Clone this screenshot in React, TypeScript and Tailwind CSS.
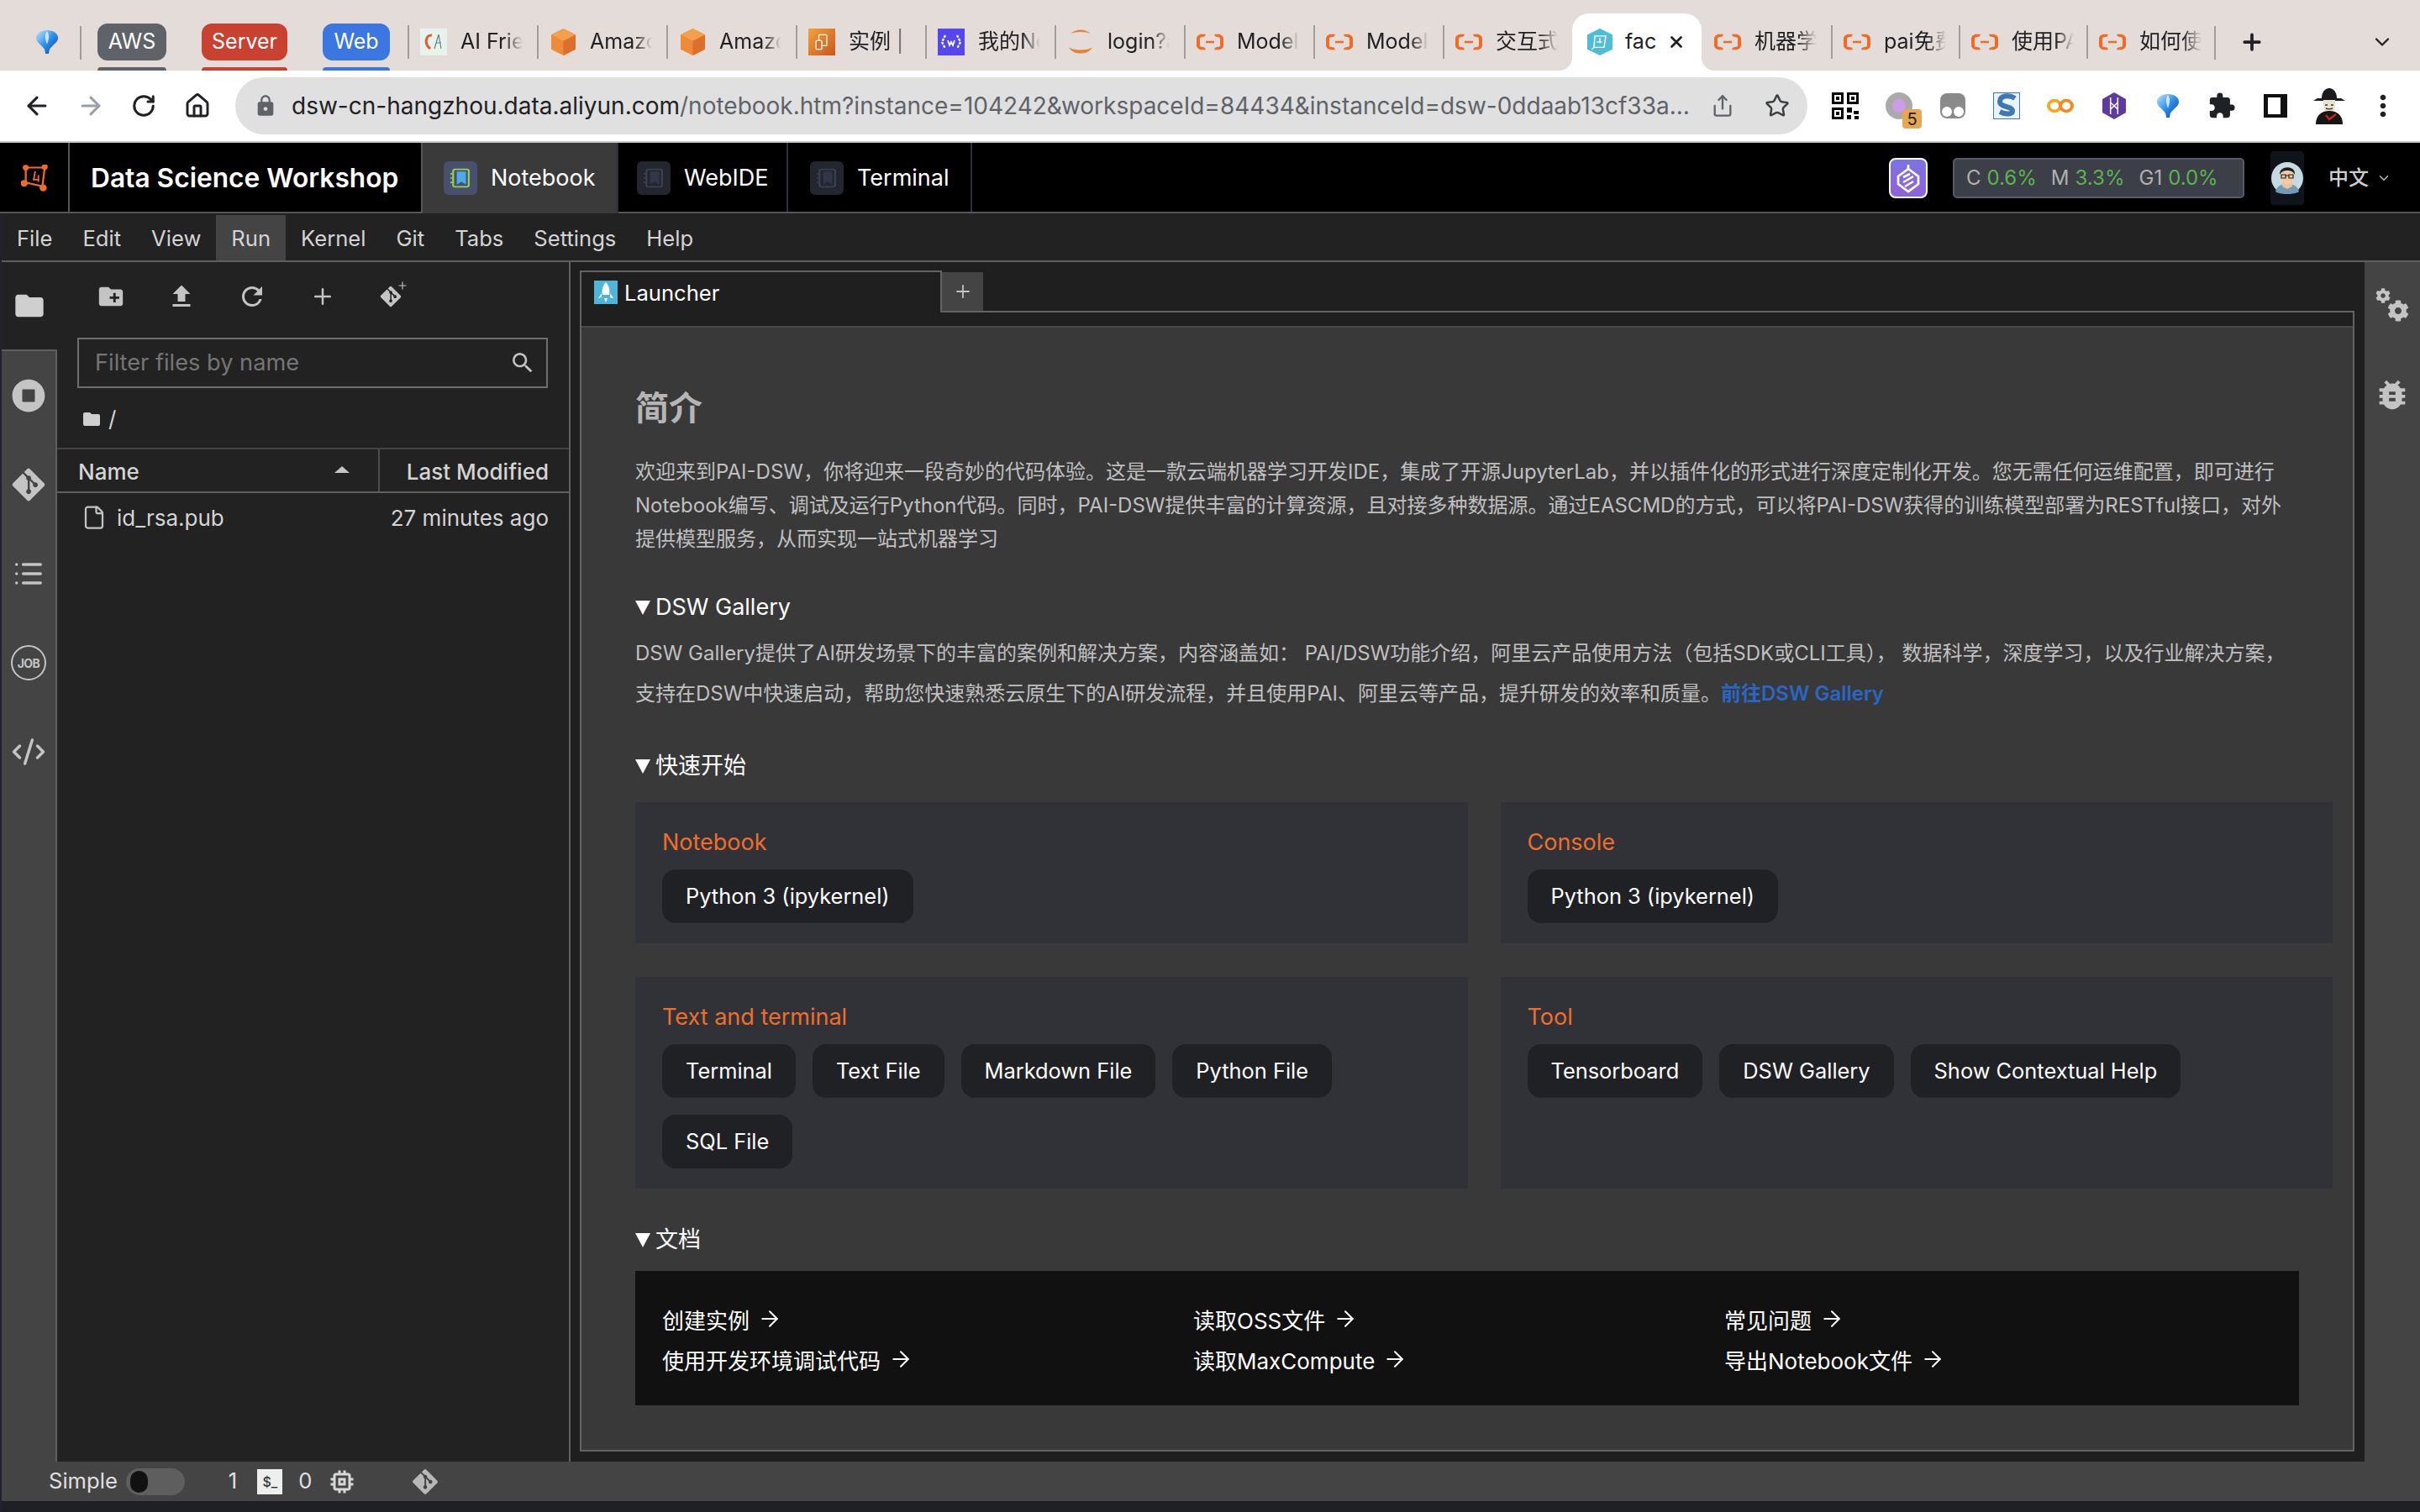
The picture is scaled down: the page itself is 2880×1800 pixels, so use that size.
import { ReactNode } from "react";
import {
  ArrowLeft,
  ArrowRight,
  ChevronDown,
  CodeXml,
  File,
  House,
  List,
  Plus,
  RotateCw,
  Share,
  Star,
  X,
} from "lucide-react";
import { FaCog, FaGitAlt, FaStopCircle } from "react-icons/fa";
import {
  MdBugReport,
  MdCreateNewFolder,
  MdExtension,
  MdFileUpload,
  MdFolder,
  MdLock,
  MdMemory,
  MdMoreVert,
  MdRefresh,
  MdSearch,
} from "react-icons/md";

const Balloon = () => (
  <svg width="28" height="30" viewBox="0 0 30 32">
    <defs>
      <linearGradient id="balloon" x1="0" y1="0" x2="1" y2="1">
        <stop offset="0" stopColor="#bfe6ff" />
        <stop offset="0.5" stopColor="#2f8fe8" />
        <stop offset="1" stopColor="#0b3f9e" />
      </linearGradient>
    </defs>
    <path d="M15 1C7 1 1 5 1 11c0 6 9 10 11 15l1 5h4l1-5c2-5 11-9 11-15 0-6-6-10-14-10Z" fill="url(#balloon)" />
    <path d="M15 2c-3 4-3 9 0 17 3-8 3-13 0-17Z" fill="#eaf6ff" opacity="0.8" />
  </svg>
);

const AliIcon = () => (
  <svg width="32" height="20" viewBox="0 0 32 24" preserveAspectRatio="none" fill="#f06c26">
    <path d="M11 1H6C3 1 0 4 0 7v10c0 3 3 6 6 6h5l-1-3-4-1c-1 0-2-1-2-2V7c0-1 1-2 2-2l4-1Z" />
    <path d="M21 1h5c3 0 6 3 6 6v10c0 3-3 6-6 6h-5l1-3 4-1c1 0 2-1 2-2V7c0-1-1-2-2-2l-4-1Z" />
    <rect x="11" y="10.5" width="10" height="3" />
  </svg>
);

const Cube = () => (
  <svg width="29" height="32" viewBox="0 0 30 40" preserveAspectRatio="none">
    <path d="M15 0 30 9v22l-15 9L0 31V9Z" fill="#ee8b3a" />
    <path d="M15 18 30 9v22l-15 9Z" fill="#dd6f2a" />
    <path d="M15 0 30 9 15 18 0 9Z" fill="#f3a04e" />
  </svg>
);

const CaiIcon = () => (
  <div className="flex h-8 w-8 items-center justify-center bg-[#e8f3ee]">
    <svg width="26" height="24" viewBox="0 0 26 24" fill="none">
      <path d="M11 4C4 3 1 14 9 20" stroke="#d8612a" strokeWidth="3" />
      <path d="M14 20 19 3l3 17M16 13h6" stroke="#6b7f80" strokeWidth="1.2" />
    </svg>
  </div>
);

const ChipIcon = () => (
  <div className="flex h-8 w-8 items-center justify-center bg-gradient-to-br from-[#f0a23a] to-[#c9561e]">
    <svg width="20" height="24" viewBox="0 0 22 28" fill="none" stroke="#fff" strokeWidth="1.5">
      <rect x="7" y="4" width="11" height="15" rx="1" />
      <rect x="3" y="12" width="8" height="12" rx="1" fill="#d9702a" />
    </svg>
  </div>
);

const CodeBlocks = () => (
  <div className="flex h-8 w-8 items-center justify-center bg-[#5546f0]">
    <svg width="26" height="20" viewBox="0 0 26 20" fill="none" stroke="#fff" strokeWidth="2.4">
      <path d="M6 2 2 10l4 8M20 2l4 8-4 8" strokeDasharray="3 1.5" />
      <path d="M9 8l2 6 2-4 2 4 2-6" strokeWidth="1.8" />
    </svg>
  </div>
);

const Swoosh = () => (
  <svg width="32" height="32" viewBox="0 0 32 40" preserveAspectRatio="none" fill="#e9803a">
    <path d="M4 8C10 0 22 0 28 8 22 4 10 4 4 8Z" />
    <path d="M2 28c6 12 22 12 28 0-6 5-22 5-28 0Z" />
  </svg>
);

const FaceIcon = () => (
  <svg width="32" height="32" viewBox="0 0 32 40" preserveAspectRatio="none">
    <path d="M16 0 31 9v22L16 40 1 31V9Z" fill="#4fbcd9" />
    <path d="M10 11h13l-2 17H9ZM12 20h7M16 14v8M9 28l-3 3" stroke="#fff" strokeWidth="1.5" fill="none" />
  </svg>
);

const tabs: { label: string; icon: ReactNode; narrow?: boolean; active?: boolean }[] = [
  { label: "AI Frie", icon: <CaiIcon /> },
  { label: "Amazo", icon: <Cube /> },
  { label: "Amazo", icon: <Cube /> },
  { label: "实例 | E", icon: <ChipIcon /> },
  { label: "我的No", icon: <CodeBlocks /> },
  { label: "login?a", icon: <Swoosh /> },
  { label: "ModelS", icon: <AliIcon /> },
  { label: "ModelS", icon: <AliIcon /> },
  { label: "交互式", icon: <AliIcon /> },
  { label: "fac", icon: <FaceIcon />, active: true },
  { label: "机器学", icon: <AliIcon /> },
  { label: "pai免费", icon: <AliIcon />, narrow: true },
  { label: "使用PA", icon: <AliIcon />, narrow: true },
  { label: "如何使", icon: <AliIcon />, narrow: true },
];

function TabStrip() {
  return (
    <div className="flex h-[84px] shrink-0 bg-[#e3dcd9] text-[25px] text-[#202124]">
      <div className="flex h-full w-[95px] items-center justify-end pt-[16px] pr-[25px]">
        <Balloon />
      </div>
      <div className="my-[31px] h-10 w-[2px] shrink-0 bg-[#a19d9b]" />
      <div className="ml-[19px] flex w-[369px] text-white">
        <div className="mr-[42px] flex w-[82px] flex-col pt-[28px]">
          <div className="flex h-11 items-center justify-center rounded-[12px] bg-[#5f6368]">AWS</div>
          <div className="mt-2 h-1 rounded-t-[4px] bg-[#5f6368]" />
        </div>
        <div className="mr-[42px] flex w-[102px] flex-col pt-[28px]">
          <div className="flex h-11 items-center justify-center rounded-[12px] bg-[#c94131]">Server</div>
          <div className="mt-2 h-1 rounded-t-[4px] bg-[#c94131]" />
        </div>
        <div className="flex w-[80px] flex-col pt-[28px]">
          <div className="flex h-11 items-center justify-center rounded-[12px] bg-[#3b76e1]">Web</div>
          <div className="mt-2 h-1 rounded-t-[4px] bg-[#3b76e1]" />
        </div>
      </div>
      {tabs.map((t, i) =>
        t.active ? (
          <div
            key={i}
            className="relative mt-4 flex h-[68px] w-[154px] shrink-0 items-center rounded-t-[20px] bg-white pl-[17px] before:absolute before:bottom-0 before:-left-4 before:h-4 before:w-4 before:bg-[radial-gradient(circle_at_0_0,transparent_16px,white_16px)] after:absolute after:-right-4 after:bottom-0 after:h-4 after:w-4 after:bg-[radial-gradient(circle_at_100%_0,transparent_16px,white_16px)]"
          >
            <div className="flex w-8 justify-center">{t.icon}</div>
            <span className="ml-[14px] w-[34px]">{t.label}</span>
            <X size={22} strokeWidth={3} className="ml-[16px]" />
          </div>
        ) : (
          <div key={i} className={`mt-4 flex h-[68px] shrink-0 items-center ${t.narrow ? "w-[152px]" : "w-[154px]"}`}>
            {tabs[i - 1]?.active ? (
              <div className="h-10 w-[2px]" />
            ) : (
              <div className="h-10 w-[2px] bg-[#a19d9b]" />
            )}
            <div className="ml-[13px] flex w-8 justify-center">{t.icon}</div>
            <span className="ml-[16px] w-[74px] overflow-hidden whitespace-nowrap [mask-image:linear-gradient(to_right,black_70%,transparent)]">
              {t.label}
            </span>
          </div>
        ),
      )}
      <div className="my-[31px] h-10 w-[2px] shrink-0 bg-[#a19d9b]" />
      <Plus size={30} strokeWidth={3} className="mt-[35px] ml-[28px] shrink-0" />
      <ChevronDown size={28} strokeWidth={2} className="mt-[36px] ml-[126px] shrink-0" />
    </div>
  );
}

function Slot({ children }: { children: ReactNode }) {
  return <div className="flex w-[64px] shrink-0 items-center justify-center">{children}</div>;
}

function Extensions() {
  return (
    <div className="ml-[13px] flex items-center text-[#202124]">
      <Slot>
        <svg width="32" height="32" viewBox="0 0 32 32" fill="#000">
          <path d="M0 0h14v14H0ZM3 3v8h8V3ZM18 0h14v14H18ZM21 3v8h8V3ZM0 18h14v14H0ZM3 21v8h8v-8ZM18 18h6v6h-6ZM26 22h6v4h-6ZM18 27h5v5h-5ZM27 28h5v4h-5Z" />
          <rect x="5" y="5" width="4" height="4" />
          <rect x="23" y="5" width="4" height="4" />
          <rect x="5" y="23" width="4" height="4" />
        </svg>
      </Slot>
      <Slot>
        <div className="relative h-8 w-8">
          <div className="flex h-8 w-8 items-center justify-center rounded-full bg-[#aaaaaa]">
            <div className="h-4 w-4 rounded-full bg-[#cd9be8]" />
          </div>
          <div className="absolute top-[20px] left-[20px] flex h-[23px] w-[23px] items-center justify-center rounded-[4px] bg-[#e5a752] text-[20px] leading-none text-[#222]">
            5
          </div>
        </div>
      </Slot>
      <Slot>
        <div className="flex h-[30px] w-[30px] items-end justify-center gap-[2px] rounded-[8px] bg-[#8a8a8a] pb-[2px]">
          <div className="h-3 w-3 rounded-full bg-white" />
          <div className="h-3 w-3 rounded-full bg-white" />
        </div>
      </Slot>
      <Slot>
        <svg width="32" height="32" viewBox="0 0 32 32">
          <rect width="32" height="32" fill="#eaf2fa" stroke="#3f78b0" strokeWidth="2" />
          <path d="M26 7C18 2 8 4 8 11c0 7 15 5 15 11 0 4-7 5-15 1" fill="none" stroke="#3f78b0" strokeWidth="6" />
        </svg>
      </Slot>
      <Slot>
        <svg width="32" height="20" viewBox="0 0 32 22" preserveAspectRatio="none" fill="none">
          <circle cx="9" cy="11" r="7" stroke="#f5a623" strokeWidth="4" />
          <circle cx="23" cy="11" r="7" stroke="#f08a24" strokeWidth="4" />
        </svg>
      </Slot>
      <Slot>
        <svg width="28" height="32" viewBox="0 0 26 32" preserveAspectRatio="none">
          <path d="M13 0 26 8v16l-13 8L0 24V8Z" fill="#5f3a9e" />
          <path d="M9 6v20M17 6v20M9 12l8 8M17 12l-8 8" stroke="#fff" strokeWidth="1.4" fill="none" />
        </svg>
      </Slot>
      <Slot>
        <Balloon />
      </Slot>
      <Slot>
        <MdExtension size={34} className="text-[#202124]" />
      </Slot>
      <Slot>
        <div className="h-7 w-7 border-y-4 border-r-[8px] border-l-[5px] border-[#111]" />
      </Slot>
      <Slot>
        <svg width="42" height="44" viewBox="0 0 40 44">
          <path d="M6 13h28l5 3H1Z" fill="#1a1a1a" />
          <path d="M11 13c0-16 18-16 18 0Z" fill="#1a1a1a" />
          <path d="M13 15h14v8c0 4-4 7-7 7s-7-3-7-7Z" fill="#e9e2cf" />
          <path d="M15 21h3M22 21h3M16 25c2 1 6 1 8 0" stroke="#333" strokeWidth="1.4" fill="none" />
          <path d="M4 44c0-12 8-16 16-16s16 4 16 16Z" fill="#161616" />
          <path d="M16 33l4 5 8-6" stroke="#c22" strokeWidth="2.4" fill="none" />
        </svg>
      </Slot>
      <Slot>
        <MdMoreVert size={40} className="text-[#202124]" />
      </Slot>
    </div>
  );
}

function Toolbar() {
  return (
    <div className="flex h-[84px] shrink-0 items-center bg-white text-[#202124]">
      <div className="flex w-[280px] shrink-0 items-center">
        <ArrowLeft size={34} strokeWidth={2.2} className="ml-[27px]" />
        <ArrowRight size={34} strokeWidth={2.2} className="ml-[30px] text-[#9aa0a6]" />
        <RotateCw size={30} strokeWidth={2.4} className="ml-[31px]" />
        <House size={32} strokeWidth={2.2} className="ml-[33px]" />
      </div>
      <div className="flex h-[68px] w-[1871px] shrink-0 items-center rounded-full bg-[#e0e0e0] text-[28px] text-[#5f6368]">
        <MdLock size={28} className="ml-[22px] text-[#5f6368]" />
        <div className="ml-[17px] w-[1655px] whitespace-nowrap">
          <span className="text-[#202124]">dsw-cn-hangzhou.data.aliyun.com</span>
          /notebook.htm?instance=104242&amp;workspaceId=84434&amp;instanceId=dsw-0ddaab13cf33a...
        </div>
        <Share size={28} strokeWidth={2} className="ml-[34px]" />
        <Star size={30} strokeWidth={2} className="ml-[36px] text-[#3c4043]" />
      </div>
      <Extensions />
    </div>
  );
}

function AppTab({
  label,
  color,
  active,
  stroke,
  className,
}: {
  label: string;
  color: string;
  active?: boolean;
  stroke: string;
  className: string;
}) {
  return (
    <div
      className={`flex items-center gap-4 border-r-2 border-[#2c2f3c] text-[27px] text-white ${
        active ? "h-[84px] bg-[#3a3a3a]" : "h-[82px] pt-[2px]"
      } ${className}`}
    >
      <div className="flex h-10 w-10 items-center justify-center rounded-[6px]" style={{ background: color }}>
        <svg width="24" height="24" viewBox="0 0 22 28" preserveAspectRatio="none" fill="none" stroke={stroke} strokeWidth="2">
          <rect x="3" y="2" width="17" height="24" rx="2" />
          <path d="M7 23V5h10v18l-5-4Z" fill={active ? "#4fa8e8" : "#333648"} stroke="none" />
          <path d="M1 7v2M1 13v2M1 19v2" />
        </svg>
      </div>
      {label}
    </div>
  );
}

function AppHeader() {
  return (
    <div className="flex h-[86px] shrink-0 items-start border-t-2 border-b-2 border-t-[#c9c9c9] border-b-[#555] bg-black">
      <div className="flex h-[82px] w-[83px] items-center justify-center border-r-2 border-[#555] pt-[2px]">
        <svg width="32" height="32" viewBox="0 0 34 36" preserveAspectRatio="none" fill="none" stroke="#ee6c2a" strokeWidth="2.4">
          <path d="M6 4h24l-3 25L6 24Z" />
          <path d="M18 9l-2 11h6M22 14v9" strokeWidth="2" />
          <circle cx="6" cy="4" r="2.6" fill="#ee6c2a" />
          <circle cx="30" cy="3" r="2.6" fill="#ee6c2a" />
          <circle cx="4" cy="25" r="3.4" fill="#ee6c2a" />
          <circle cx="28" cy="31" r="3.4" fill="#ee6c2a" />
        </svg>
      </div>
      <div className="flex h-[82px] w-[420px] items-center border-r-2 border-[#555] pt-[2px] pl-[25px] text-[31.7px] font-semibold whitespace-nowrap text-white">
        Data Science Workshop
      </div>
      <AppTab label="Notebook" color="#4a4f6e" stroke="#8fd84a" active className="w-[233px] pl-[25px]" />
      <AppTab label="WebIDE" color="#23252f" stroke="#3d4050" className="w-[202px] pl-[22px]" />
      <AppTab label="Terminal" color="#23252f" stroke="#3d4050" className="w-[219px] pl-[26px]" />
      <div className="ml-[1091px] flex h-[82px] items-center pt-[2px]">
        <div className="flex h-12 w-[46px] items-center justify-center rounded-[8px] border-2 border-white bg-gradient-to-b from-[#7c72e2] to-[#8f63d6]">
          <svg width="32" height="38" viewBox="0 0 32 38" fill="none" stroke="#fff" strokeWidth="2.6">
            <path d="M16 3v5M16 8l12 9v9L16 35 4 26v-9Z" />
            <path d="M10 24l12-7M10 18l8-4M12 29l10-6" />
          </svg>
        </div>
        <div className="ml-[30px] flex h-12 w-[347px] items-center rounded-[5px] border-2 border-[#575b66] bg-[#3c3e48] pl-[14px] text-[24px] whitespace-nowrap text-[#b0b0b0]">
          C <span className="ml-[7px] text-[#5cb34e]">0.6%</span>
          <span className="ml-[17px]">M</span> <span className="ml-[7px] text-[#5cb34e]">3.3%</span>
          <span className="ml-[17px]">G1</span> <span className="ml-[7px] text-[#5cb34e]">0.0%</span>
        </div>
        <div className="ml-[31px] flex h-16 w-10 items-center justify-center rounded-[4px] bg-[#10131a]">
          <svg width="38" height="38" viewBox="0 0 38 38">
            <circle cx="19" cy="19" r="19" fill="#c6dbe0" />
            <path d="M5 35c2-7 7-9 14-9s12 2 14 9c-4 4-24 4-28 0Z" fill="#6f9bb8" />
            <path d="M13 24h12v5l-6 3-6-3Z" fill="#eebf9b" />
            <ellipse cx="19" cy="17" rx="8" ry="10" fill="#f0c9a6" />
            <path d="M10 15C9 4 29 3 28 15c-2-4-5-5-9-5s-7 1-9 5Z" fill="#1c1c1c" />
            <path d="M12 15h5v4h-5ZM21 15h5v4h-5ZM17 16h4" fill="none" stroke="#222" strokeWidth="1.2" />
          </svg>
        </div>
        <span className="ml-[29px] text-[24px] font-medium text-[#cfcfcf]">中文</span>
        <ChevronDown size={18} className="ml-[9px] text-[#bbb]" />
      </div>
    </div>
  );
}

const menus = ["File", "Edit", "View", "Run", "Kernel", "Git", "Tabs", "Settings", "Help"];

function MenuBar() {
  return (
    <div className="flex h-[58px] shrink-0 border-b-2 border-[#5f5f5f] bg-[#222222] text-[25.6px] text-[#d4d4d4]">
      {menus.map((m) => (
        <div key={m} className={`mt-[2px] flex items-center px-[18px] pt-[3px] ${m === "Run" ? "bg-[#444444]" : ""}`}>
          {m}
        </div>
      ))}
    </div>
  );
}

function LeftRail() {
  const cell = "flex h-[106px] items-center justify-center";
  return (
    <div className="flex w-[66px] shrink-0 flex-col text-[#c4c4c4]">
      <div className="flex h-[104px] items-center justify-center bg-[#222222]">
        <MdFolder size={40} className="text-[#cfcfcf]" />
      </div>
      <div className="flex flex-1 flex-col border-t-2 border-r-2 border-[#5f5f5f] bg-[#444444]">
        <div className={cell}>
          <FaStopCircle size={40} />
        </div>
        <div className={cell}>
          <FaGitAlt size={44} />
        </div>
        <div className={cell}>
          <List size={38} strokeWidth={2.2} />
        </div>
        <div className={cell}>
          <div className="flex h-[42px] w-[42px] items-center justify-center rounded-full border-2 border-[#c4c4c4] text-[14px] font-bold tracking-[-0.5px]">
            JOB
          </div>
        </div>
        <div className={cell}>
          <CodeXml size={42} strokeWidth={2} />
        </div>
      </div>
    </div>
  );
}

function FileBrowser() {
  return (
    <div className="flex w-[611px] shrink-0 flex-col border-r-2 border-[#5f5f5f] bg-[#222222] text-[26px] text-[#d4d4d4]">
      <div className="flex h-[82px] shrink-0 items-center pl-[22px] text-[#c4c4c4]">
        <div className="flex w-[84px] justify-center">
          <MdCreateNewFolder size={34} />
        </div>
        <div className="flex w-[84px] justify-center">
          <MdFileUpload size={36} />
        </div>
        <div className="flex w-[84px] justify-center">
          <MdRefresh size={36} />
        </div>
        <div className="flex w-[84px] justify-center">
          <Plus size={30} strokeWidth={2} />
        </div>
        <div className="relative flex w-[84px] justify-center pr-[6px]">
          <FaGitAlt size={28} />
          <Plus size={14} strokeWidth={2} className="absolute -top-[6px] left-[46px]" />
        </div>
      </div>
      <div className="mt-2 ml-6 flex h-[60px] w-[560px] shrink-0 items-center justify-between border-2 border-[#6e6e6e] pr-3 pl-[19px] text-[27.2px] text-[#757575]">
        Filter files by name
        <MdSearch size={32} className="text-[#c4c4c4]" />
      </div>
      <div className="flex h-[71px] shrink-0 items-center pt-[2px] pl-[29px]">
        <MdFolder size={24} className="text-[#cfcfcf]" />
        <span className="ml-[8px]">/</span>
      </div>
      <div className="flex h-[54px] shrink-0 items-center border-t-2 border-b-2 border-t-[#444] border-b-[#5f5f5f] font-medium">
        <div className="flex h-full w-[384px] items-center justify-between border-r-2 border-[#4d4d4d] pt-[3px] pr-[34px] pl-[25px]">
          Name
          <div className="mb-[6px] h-0 w-0 border-x-[9px] border-b-[8px] border-x-transparent border-b-[#c4c4c4]" />
        </div>
        <div className="flex-1 pt-[3px] pr-[24px] text-right">Last Modified</div>
      </div>
      <div className="flex h-[58px] shrink-0 items-center justify-between pr-[24px] pl-[29px]">
        <div className="flex items-center">
          <File size={30} strokeWidth={1.8} className="text-[#c4c4c4]" />
          <span className="ml-[12px]">id_rsa.pub</span>
        </div>
        <span>27 minutes ago</span>
      </div>
    </div>
  );
}

function Section({ title, className }: { title: string; className: string }) {
  return (
    <div className={`flex h-10 items-center pt-[2px] text-[27px] text-white ${className}`}>
      <div className="mr-[6px] h-0 w-0 border-x-[9px] border-t-[17px] border-x-transparent border-t-white" />
      {title}
    </div>
  );
}

function LauncherButton({ label }: { label: string }) {
  return (
    <div className="flex h-16 items-center rounded-[16px] bg-[#202125] px-[28px] whitespace-nowrap text-white">
      {label}
    </div>
  );
}

function Card({ title, items }: { title: string; items: string[] }) {
  return (
    <div className="flex flex-col bg-[#313237] px-8 pt-[28px] text-[25.4px]">
      <div className="h-10 text-[27px] leading-10 text-[#ee6e2c]">{title}</div>
      <div className="mt-[12px] flex flex-wrap gap-5">
        {items.map((i) => (
          <LauncherButton key={i} label={i} />
        ))}
      </div>
    </div>
  );
}

function DocLink({ label }: { label: string }) {
  return (
    <div className="flex h-12 items-center whitespace-nowrap text-white">
      {label}
      <ArrowRight size={30} strokeWidth={1.6} className="mb-[4px] ml-[9px]" />
    </div>
  );
}

function Launcher() {
  return (
    <div className="flex flex-1 flex-col bg-[#393939] pr-6 pl-16 text-[24px] text-[#c0c0c0]">
      <h1 className="mt-[68px] h-14 text-[40px] leading-14 font-bold text-[#b5b5b5]">简介</h1>
      <p className="mt-[28px] leading-10 whitespace-nowrap">
        欢迎来到PAI-DSW，你将迎来一段奇妙的代码体验。这是一款云端机器学习开发IDE，集成了开源JupyterLab，并以插件化的形式进行深度定制化开发。您无需任何运维配置，即可进行
        <br />
        Notebook编写、调试及运行Python代码。同时，PAI-DSW提供丰富的计算资源，且对接多种数据源。通过EASCMD的方式，可以将PAI-DSW获得的训练模型部署为RESTful接口，对外
        <br />
        提供模型服务，从而实现一站式机器学习
      </p>
      <Section title="DSW Gallery" className="mt-10" />
      <p className="mt-3 leading-[47.5px] whitespace-nowrap">
        DSW Gallery提供了AI研发场景下的丰富的案例和解决方案，内容涵盖如： PAI/DSW功能介绍，阿里云产品使用方法（包括SDK或CLI工具）， 数据科学，深度学习，以及行业解决方案，
        <br />
        支持在DSW中快速启动，帮助您快速熟悉云原生下的AI研发流程，并且使用PAI、阿里云等产品，提升研发的效率和质量。
        <span className="font-semibold text-[#2a66c4]">前往DSW Gallery</span>
      </p>
      <Section title="快速开始" className="mt-[42px]" />
      <div className="mt-6 grid grid-cols-2 grid-rows-[168px_252px] gap-x-[39px] gap-y-10">
        <Card title="Notebook" items={["Python 3 (ipykernel)"]} />
        <Card title="Console" items={["Python 3 (ipykernel)"]} />
        <Card title="Text and terminal" items={["Terminal", "Text File", "Markdown File", "Python File", "SQL File"]} />
        <Card title="Tool" items={["Tensorboard", "DSW Gallery", "Show Contextual Help"]} />
      </div>
      <Section title="文档" className="mt-10" />
      <div className="mt-[18px] grid h-40 w-[1980px] grid-cols-[632px_632px_1fr] bg-[#111111] px-8 pt-[35px] text-[26px]">
        <div>
          <DocLink label="创建实例" />
          <DocLink label="使用开发环境调试代码" />
        </div>
        <div>
          <DocLink label="读取OSS文件" />
          <DocLink label="读取MaxCompute" />
        </div>
        <div>
          <DocLink label="常见问题" />
          <DocLink label="导出Notebook文件" />
        </div>
      </div>
    </div>
  );
}

function MainArea() {
  return (
    <div className="flex min-w-0 flex-1 flex-col bg-[#1f1f1f] pt-[10px] pr-[12px] pb-[12px] pl-[11px]">
      <div className="flex h-[50px] shrink-0 items-end">
        <div className="flex h-[50px] w-[431px] items-center border-x-2 border-t-2 border-[#636363] bg-[#1f1f1f] pl-[15px] text-[25.6px] text-white">
          <div className="flex h-[28px] w-[28px] items-center justify-center bg-[#4db6d8]">
            <svg width="20" height="26" viewBox="0 0 20 26" fill="#fff">
              <path d="M10 1c4 4 5 9 4 15H6C5 10 6 5 10 1ZM5 14l-4 6 4-1ZM15 14l4 6-4-1ZM8 20h4l-2 5Z" />
            </svg>
          </div>
          <span className="ml-[8px] pt-[2px]">Launcher</span>
        </div>
        <div className="h-full flex-1 border-b-2 border-[#636363]">
          <div className="mt-[2px] flex h-[46px] w-[49px] items-center justify-center bg-[#444444] text-[#c4c4c4]">
            <Plus size={24} strokeWidth={1.8} />
          </div>
        </div>
      </div>
      <div className="flex min-h-0 flex-1 flex-col border-x-2 border-b-2 border-[#636363]">
        <div className="h-[18px] shrink-0 border-b-2 border-[#4a4a4a]" />
        <Launcher />
      </div>
    </div>
  );
}

function StatusBar() {
  return (
    <div className="flex h-[47px] shrink-0 items-center bg-[#444444] text-[25.6px] text-[#e0e0e0]">
      <span className="ml-[56px]">Simple</span>
      <div className="ml-[10px] flex h-8 w-[70px] items-center rounded-full bg-[#5e5e5e] pl-[5px]">
        <div className="h-[26px] w-[21px] rounded-full bg-[#111111]" />
      </div>
      <span className="ml-[52px]">1</span>
      <div className="ml-[24px] flex h-[30px] w-[30px] items-center justify-center bg-[#eeeeee] text-[16px] font-medium text-[#333]">
        $_
      </div>
      <span className="ml-[19px]">0</span>
      <MdMemory size={36} className="ml-[18px] text-[#d8d8d8]" />
      <FaGitAlt size={34} className="ml-[64px] text-[#b8b8b8]" />
    </div>
  );
}

export default function App() {
  return (
    <div className="flex h-screen w-screen flex-col overflow-hidden bg-[#1f1f1f] font-[Inter,'Noto_Sans_CJK_SC',sans-serif]">
      <TabStrip />
      <Toolbar />
      <AppHeader />
      <div className="flex min-h-0 flex-1 flex-col border-l-2 border-[#20222f]">
        <MenuBar />
        <div className="flex min-h-0 flex-1">
          <LeftRail />
          <FileBrowser />
          <MainArea />
          <div className="flex w-[66px] shrink-0 flex-col items-center bg-[#444444] text-[#c4c4c4]">
            <div className="relative mt-[31px] h-10 w-10">
              <FaCog size={18} className="absolute top-0 left-0" />
              <FaCog size={26} className="absolute right-0 bottom-0" />
            </div>
            <MdBugReport size={46} className="mt-[64px]" />
          </div>
        </div>
        <StatusBar />
        <div className="h-[13px] shrink-0 bg-[#1f2025]" />
      </div>
    </div>
  );
}
